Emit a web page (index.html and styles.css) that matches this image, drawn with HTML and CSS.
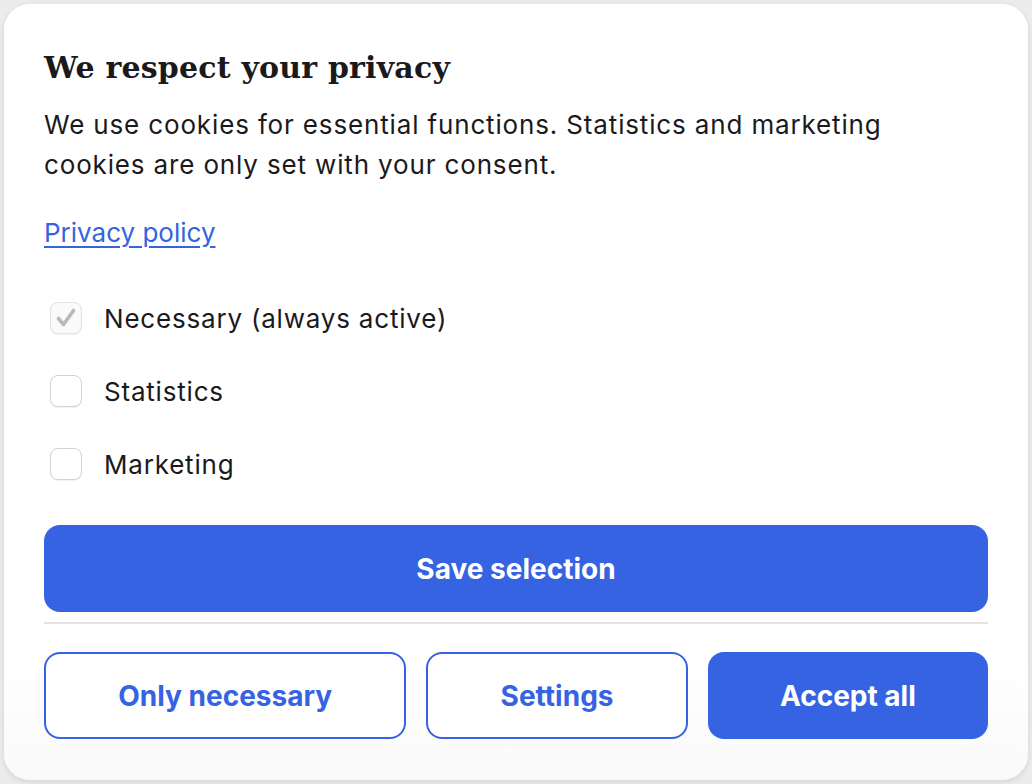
FILE: index.html
```html
<!DOCTYPE html>
<html>
    <head>
        <title>Cookie consent</title>
        <meta charset="utf-8" />
        <link rel="stylesheet" href="styles.css">
    </head>
    <body>
        <div class="banner">
            <h2 class="title">We respect your privacy</h2>
            <p class="intro">We use cookies for essential functions. Statistics and marketing cookies are only set with your consent.</p>
            <a class="policy" href="#">Privacy policy</a>

            <div class="options">
                <label class="option">
                    <span class="box disabled">
                        <svg width="32" height="32" viewBox="0 0 32 32"><path d="M8.5 16.5 L13.5 22.5 L23.5 8.5" fill="none" stroke="#b9b9b9" stroke-width="3.6" stroke-linecap="round" stroke-linejoin="round"/></svg>
                    </span>
                    <span class="label">Necessary (always active)</span>
                </label>
                <label class="option">
                    <span class="box"></span>
                    <span class="label">Statistics</span>
                </label>
                <label class="option">
                    <span class="box"></span>
                    <span class="label">Marketing</span>
                </label>
            </div>

            <button class="btn primary save">Save selection</button>
            <div class="divider"></div>

            <div class="actions">
                <button class="btn outline">Only necessary</button>
                <button class="btn outline">Settings</button>
                <button class="btn primary">Accept all</button>
            </div>
        </div>
    </body>
</html>
```

FILE: styles.css
```css
html, body {
    margin:             0;
    background:         #ececec;
}

body {
    color:              #1a1a1c;
    font-family:        Inter, "Liberation Sans", sans-serif;
    padding:            4px;
}

.banner {
    background:         linear-gradient(to bottom, #ffffff 85%, #f9f9f9 100%);
    border-radius:      26px;
    box-shadow:         0 2px 6px rgba( 0, 0, 0, 0.10 );
    box-sizing:         border-box;
    height:             776px;
    padding:            46px 40px 0;
}

.title {
    font-family:        "DejaVu Serif", "Liberation Serif", serif;
    font-size:          30px;
    font-weight:        bold;
    line-height:        36px;
    letter-spacing:     0.2px;
    margin:             0 0 19px;
}

.intro {
    font-size:          26px;
    letter-spacing:     0.85px;
    line-height:        40px;
    margin:             0 0 28px;
    max-width:          900px;
}

.policy {
    color:              #3563e2;
    display:            inline-block;
    font-size:          26px;
    line-height:        40px;
    text-underline-offset: 4px;
}

/* Consent options */
.options {
    display:            flex;
    flex-direction:     column;
    gap:                33px;
    margin:             45px 0 41px;
}

.option {
    align-items:        center;
    display:            flex;
    font-size:          26px;
    letter-spacing:     0.8px;
    height:             40px;
}

.box {
    background:         #fff;
    border:             1.5px solid #d2d2d2;
    border-radius:      8px;
    box-shadow:         0 1px 1px rgba( 0, 0, 0, 0.06 );
    box-sizing:         border-box;
    display:            inline-flex;
    height:             32px;
    margin:             0 22px 0 6px;
    width:              32px;
}

.box.disabled {
    background:         #fafafa;
    border-color:       #e2e2e2;
}

.box svg {
    margin:             -1.5px;
}

/* Buttons */
.btn {
    border-radius:      16px;
    box-sizing:         border-box;
    cursor:             pointer;
    font-family:        Inter, "Liberation Sans", sans-serif;
    font-size:          28px;
    font-weight:        bold;
    height:             87px;
}

.btn.primary {
    background:         #3563e2;
    border:             none;
    color:              #fff;
}

.btn.outline {
    background:         #fff;
    border:             2px solid #3563e2;
    color:              #3563e2;
}

.save {
    display:            block;
    width:              100%;
}

.divider {
    background:         #e3e3e3;
    height:             2px;
    margin:             10px 0 28px;
}

.actions {
    display:            flex;
    gap:                20px;
}

.actions .btn {
    flex:               1 1 auto;
}
```
